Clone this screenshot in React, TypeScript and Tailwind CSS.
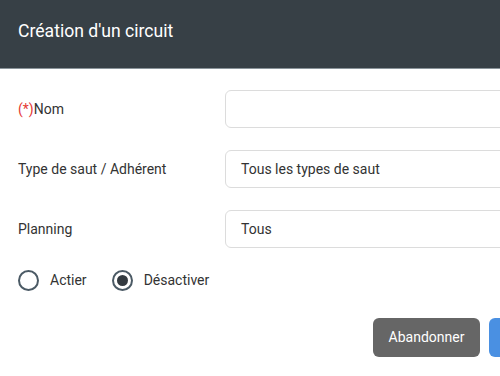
import React from "react";

const font = { fontFamily: "Roboto, 'Liberation Sans', sans-serif" };

function Radio({ checked, label }: { checked?: boolean; label: string }) {
  return (
    <label className="flex items-center gap-[11px]">
      <span className="flex h-[21px] w-[21px] items-center justify-center rounded-full border-2 border-[#4b5a65]">
        {checked && <span className="h-[11px] w-[11px] rounded-full bg-[#333a40]" />}
      </span>
      <span className="text-[14px] text-[#333]">{label}</span>
    </label>
  );
}

function Field({ label, value, required }: { label: string; value?: string; required?: boolean }) {
  return (
    <div className="flex items-center">
      <div className="w-[207px] shrink-0 text-[14px] text-[#333]">
        {required && <span className="text-[#e53935]">(*)</span>}
        {label}
      </div>
      <div className="flex h-[38px] w-[300px] shrink-0 items-center rounded-[6px] border border-[#dcdcdc] px-[15px] text-[14px] text-[#333]">
        {value}
      </div>
    </div>
  );
}

export default function App() {
  return (
    <div className="h-[376px] w-[500px] overflow-hidden bg-white" style={font}>
      <div className="flex h-[69px] items-center border-b border-[#8a949a] bg-[#374046] px-[18px] pb-[6px]">
        <h1 className="text-[17.6px] text-white">Création d'un circuit</h1>
      </div>
      <div className="flex flex-col gap-[22px] pl-[18px] pt-[21px]">
        <Field label="Nom" required />
        <Field label="Type de saut / Adhérent" value="Tous les types de saut" />
        <Field label="Planning" value="Tous" />
      </div>
      <div className="mt-[22px] flex items-center gap-[25px] pl-[18px]">
        <Radio label="Actier" />
        <Radio label="Désactiver" checked />
      </div>
      <div className="mt-[27px] flex gap-[9px] pl-[373px]">
        <button className="h-[39px] w-[107px] shrink-0 rounded-[6px] bg-[#666] text-[14px] text-white">Abandonner</button>
        <button className="h-[39px] shrink-0 rounded-[6px] bg-[#4a90e2] px-[20px] text-[14px] text-white">Valider</button>
      </div>
    </div>
  );
}
